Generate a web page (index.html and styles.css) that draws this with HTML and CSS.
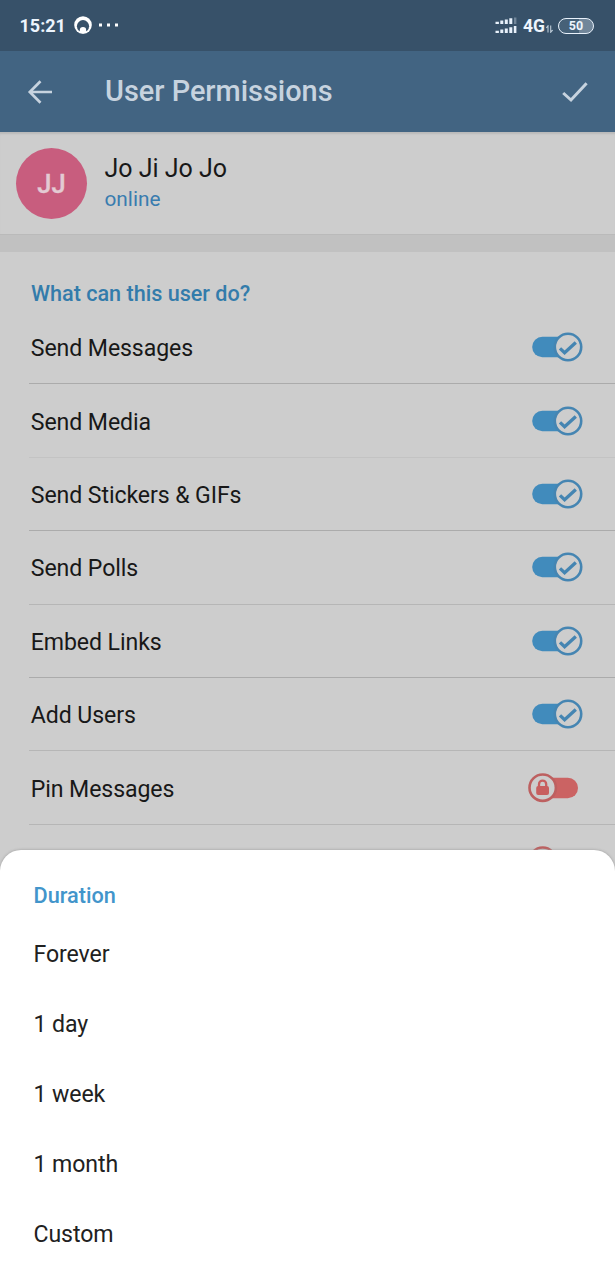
FILE: index.html
```html
<!DOCTYPE html>
<html lang="en">
<head>
<meta charset="utf-8">
<title>User Permissions</title>
<link rel="stylesheet" href="styles.css">
</head>
<body>
<svg class="defs" width="0" height="0" aria-hidden="true">
  <symbol id="on" viewBox="-4 0 58 32">
    <rect x="2.2" y="5.8" width="38" height="20.4" rx="10.2" fill="#418bbc"/>
    <circle cx="38" cy="16" r="13.2" fill="#cdcdcd" stroke="#4585b2" stroke-width="2.6"/>
    <path d="M30 17.4l4.6 4.4L45.8 11.5" fill="none" stroke="#4585b2" stroke-width="3.3"/>
  </symbol>
  <symbol id="locked" viewBox="-4 0 58 32">
    <rect x="10" y="5.8" width="38" height="20.4" rx="10.2" fill="#cb6363"/>
    <circle cx="12.7" cy="15.7" r="13.2" fill="#cdcdcd" stroke="#bd6060" stroke-width="2.6"/>
    <rect x="6.2" y="14.1" width="12.8" height="8.8" rx="2" fill="#c85f5f"/>
    <path d="M9 14.7v-2.5a3.6 3.6 0 0 1 7.2 0v2.5" fill="none" stroke="#c85f5f" stroke-width="2.3"/>
  </symbol>
</svg>
<div class="screen">
  <div class="status">
    <span class="time">15:21</span>
    <svg class="ring" viewBox="0 0 18 18"><circle cx="9" cy="9" r="8.8" fill="#fff"/><circle cx="9" cy="10.2" r="6.1" fill="#375169"/><circle cx="9" cy="14.2" r="3.2" fill="#fff"/></svg>
    <svg class="dots" viewBox="0 0 20 4"><path d="M0 .5h3v3H0zM8 .5h3v3H8zM16 .5h3v3h-3z" fill="#fff"/></svg>
    <svg class="signal" viewBox="0 0 22 18">
      <path d="M.5 4.7h3.4V7H.5zM5.3 3.5h3V7h-3zM9.8 2.5h3V7h-3zM14.3 1.2h3V7h-3zM.5 13.7h3.4V16H.5zM5.3 12.5h3V16h-3zM9.8 11.5h3V16h-3zM14.3 10.2h3V16h-3zM18.8 9h2.6v7h-2.6z" fill="#e8f1fb"/>
      <path d="M19 .5h2.4V7H19z" fill="#71869a"/>
    </svg>
    <span class="net">4G</span>
    <svg class="data" viewBox="0 0 7 8"><path d="M2 7.5V.8L.3 3M4.7.5v6.7L6.6 5" fill="none" stroke="#bccbd8" stroke-width="1.1"/></svg>
    <span class="battery">50</span>
  </div>
  <header class="bar">
    <svg class="back" viewBox="0 0 26 26"><path d="M25 13H3M13.5 2.2L2.8 13l10.7 10.8" fill="none" stroke="#c7d3df" stroke-width="2.7"/></svg>
    <h1 class="title">User Permissions</h1>
    <svg class="done" viewBox="0 0 28 22"><path d="M2.2 12l7.8 7L25.6 2.2" fill="none" stroke="#c7d3df" stroke-width="3"/></svg>
  </header>
  <section class="user">
    <div class="avatar">JJ</div>
    <div class="who"><div class="name">Jo Ji Jo Jo</div><div class="state">online</div></div>
  </section>
  <section class="perms">
    <h2 class="heading">What can this user do?</h2>
    <div class="row"><span>Send Messages</span><svg class="toggle"><use href="#on"/></svg></div>
    <div class="row faint"><span>Send Media</span><svg class="toggle"><use href="#on"/></svg></div>
    <div class="row"><span>Send Stickers &amp; GIFs</span><svg class="toggle"><use href="#on"/></svg></div>
    <div class="row mid"><span>Send Polls</span><svg class="toggle"><use href="#on"/></svg></div>
    <div class="row"><span>Embed Links</span><svg class="toggle"><use href="#on"/></svg></div>
    <div class="row mid"><span>Add Users</span><svg class="toggle"><use href="#on"/></svg></div>
    <div class="row mid"><span>Pin Messages</span><svg class="toggle"><use href="#locked"/></svg></div>
    <div class="row last"><svg class="toggle"><use href="#locked"/></svg></div>
  </section>
  <section class="sheet">
    <h2 class="sheet-title">Duration</h2>
    <div class="option">Forever</div>
    <div class="option">1 day</div>
    <div class="option">1 week</div>
    <div class="option">1 month</div>
    <div class="option">Custom</div>
  </section>
</div>
</body>
</html>
```
FILE: styles.css
```css
* { box-sizing: border-box; }
body { margin: 0; font-family: Roboto, sans-serif; color: #181818; background: #cdcdcd; }
h1, h2 { margin: 0; font-weight: 500; }
svg { display: block; flex: none; }
.defs { position: absolute; }
.screen { position: relative; width: 615px; height: 1280px; overflow: hidden; }
.status { display: flex; align-items: center; height: 51px; padding: 0 21px 0 19.5px; background: #375169; color: #edf5fd; }
.time { width: 54px; font-size: 18px; font-weight: 700; line-height: 24px; }
.ring { width: 18px; height: 18px; margin-top: -1px; }
.dots { width: 20px; height: 4px; margin: -2px 0 0 7px; }
.signal { width: 22px; height: 18px; margin-left: auto; }
.net { margin-left: 6px; font-size: 17.5px; font-weight: 700; line-height: 24px; }
.data { width: 7px; height: 8px; margin: 7px 5px 0 1px; }
.battery { width: 36px; height: 16px; border: 1.5px solid #e8f1fb; border-radius: 8px; font-size: 12.5px; line-height: 14px; font-weight: 700; text-align: center; background: linear-gradient(90deg, #466178 58%, #71869a 58%); }
.bar { display: flex; align-items: center; height: 81px; padding: 0 26px 0 27px; background: #426482; color: #c7d3df; }
.back { width: 26px; height: 26px; }
.title { margin: -1px 0 0 52px; font-size: 28.9px; line-height: 40px; }
.done { width: 28px; height: 22px; margin-left: auto; }
.user { display: flex; align-items: center; height: 103px; padding-left: 16px; border-bottom: 1px solid #bababa; box-shadow: inset 0 3px 2px -1px #b9b9b9; }
.avatar { width: 71px; height: 71px; border-radius: 50%; background: #c85d7e; color: #e3cbd3; font-size: 25.5px; font-weight: 500; line-height: 72px; text-align: center; -webkit-text-stroke: 0.4px #e3cbd3; }
.who { margin-left: 17.5px; }
.name { font-size: 25px; line-height: 32px; }
.state { font-size: 20.8px; line-height: 28px; color: #397caf; }
.perms { border-top: 17px solid #c1c1c1; }
.heading { height: 59px; padding: 28px 0 0 31px; font-size: 21.6px; line-height: 28px; color: #337cab; }
.row { display: flex; align-items: center; justify-content: space-between; height: 73.4px; margin-left: 29px; padding: 0 31px 0 1.8px; border-bottom: 1px solid #ababab; font-size: 23.1px; line-height: 30px; letter-spacing: -0.09px; }
.row span { padding-top: 4px; }
.faint { border-color: #c3c3c3; }
.mid { border-color: #b6b6b6; }
.last { justify-content: flex-end; }
.toggle { width: 58px; height: 32px; }
.sheet { position: absolute; left: 0; right: 0; top: 850px; height: 430px; padding: 31px 33.5px; border-radius: 21px 21px 0 0; background: #fff; color: #212121; box-shadow: 0 0 3px #999; }
.sheet-title { height: 38px; font-size: 21.7px; line-height: 30px; color: #4295cb; }
.option { display: flex; align-items: center; height: 70px; font-size: 23.1px; letter-spacing: -0.09px; }
```
